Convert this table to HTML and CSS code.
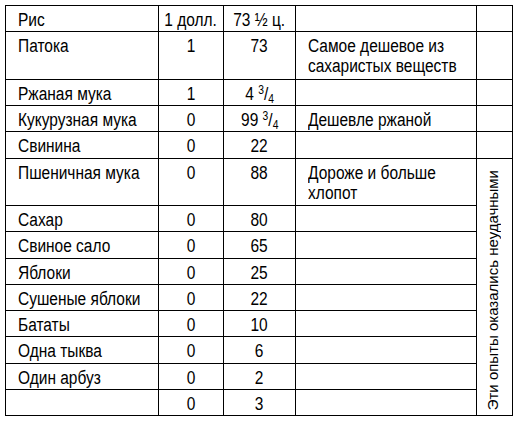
FILE: index.html
```html
<!DOCTYPE html>
<html lang="ru">
<head>
<meta charset="utf-8">
<link rel="stylesheet" href="styles.css">
</head>
<body>
<table class="grid">
  <colgroup>
    <col class="c-name">
    <col class="c-doll">
    <col class="c-qty">
    <col class="c-note">
    <col class="c-side">
  </colgroup>
  <tr class="r1"><td><span class="t">Рис</span></td><td class="num"><span class="t">1 долл.</span></td><td class="num"><span class="t">73 ½ ц.</span></td><td></td><td></td></tr>
  <tr class="r2"><td><span class="t">Патока</span></td><td class="num"><span class="t">1</span></td><td class="num"><span class="t">73</span></td><td><span class="t">Самое дешевое из<br>сахаристых веществ</span></td><td></td></tr>
  <tr class="r1"><td><span class="t">Ржаная мука</span></td><td class="num"><span class="t">1</span></td><td class="num"><span class="t">4 <sup>3</sup>/<sub>4</sub></span></td><td></td><td></td></tr>
  <tr class="r1"><td><span class="t">Кукурузная мука</span></td><td class="num"><span class="t">0</span></td><td class="num"><span class="t">99 <sup>3</sup>/<sub>4</sub></span></td><td><span class="t">Дешевле ржаной</span></td><td></td></tr>
  <tr class="r1"><td><span class="t">Свинина</span></td><td class="num"><span class="t">0</span></td><td class="num"><span class="t">22</span></td><td></td><td></td></tr>
  <tr class="r2"><td><span class="t">Пшеничная мука</span></td><td class="num"><span class="t">0</span></td><td class="num"><span class="t">88</span></td><td><span class="t">Дороже и больше<br>хлопот</span></td><td class="side" rowspan="9"><div class="vert">Эти опыты оказались неудачными</div></td></tr>
  <tr class="r1"><td><span class="t">Сахар</span></td><td class="num"><span class="t">0</span></td><td class="num"><span class="t">80</span></td><td></td></tr>
  <tr class="r1"><td><span class="t">Свиное сало</span></td><td class="num"><span class="t">0</span></td><td class="num"><span class="t">65</span></td><td></td></tr>
  <tr class="r1"><td><span class="t">Яблоки</span></td><td class="num"><span class="t">0</span></td><td class="num"><span class="t">25</span></td><td></td></tr>
  <tr class="r1"><td><span class="t">Сушеные яблоки</span></td><td class="num"><span class="t">0</span></td><td class="num"><span class="t">22</span></td><td></td></tr>
  <tr class="r1"><td><span class="t">Бататы</span></td><td class="num"><span class="t">0</span></td><td class="num"><span class="t">10</span></td><td></td></tr>
  <tr class="r1"><td><span class="t">Одна тыква</span></td><td class="num"><span class="t">0</span></td><td class="num"><span class="t">6</span></td><td></td></tr>
  <tr class="r1"><td><span class="t">Один арбуз</span></td><td class="num"><span class="t">0</span></td><td class="num"><span class="t">2</span></td><td></td></tr>
  <tr class="r1"><td></td><td class="num"><span class="t">0</span></td><td class="num"><span class="t">3</span></td><td></td></tr>
</table>
</body>
</html>
```
FILE: styles.css
```css
html, body {
  margin: 0;
  padding: 0;
  background: #fff;
}
body {
  padding: 5px 0 0 5px;
}
.grid {
  border-collapse: collapse;
  table-layout: fixed;
  width: 507px;
  font-family: "Liberation Sans", Arial, sans-serif;
  font-size: 18px;
  line-height: 20px;
  color: #000;
}
.c-name { width: 153px; }
.c-doll { width: 65px; }
.c-qty { width: 72px; }
.c-note { width: 181px; }
.c-side { width: 36px; }
.grid td {
  border: 1.5px solid #000;
  padding: 4px 0 0 12px;
  vertical-align: top;
  overflow: hidden;
  white-space: nowrap;
}
.r1 { height: 26.25px; }
.r2 { height: 47.5px; }
.t {
  display: inline-block;
  transform: scaleX(0.86);
  transform-origin: left top;
}
.grid td.num {
  text-align: center;
  padding-left: 0;
}
.grid td.num .t {
  transform-origin: center top;
}
sup, sub {
  font-size: 12px;
  line-height: 0;
}
sup { vertical-align: 6px; }
sub { vertical-align: -3px; }
.grid td.side {
  padding: 0 4px 5px 0;
  vertical-align: bottom;
}
.vert {
  writing-mode: vertical-rl;
  transform: rotate(180deg);
  font-size: 15px;
  line-height: 32px;
  white-space: nowrap;
  margin: 0 auto;
}
```
